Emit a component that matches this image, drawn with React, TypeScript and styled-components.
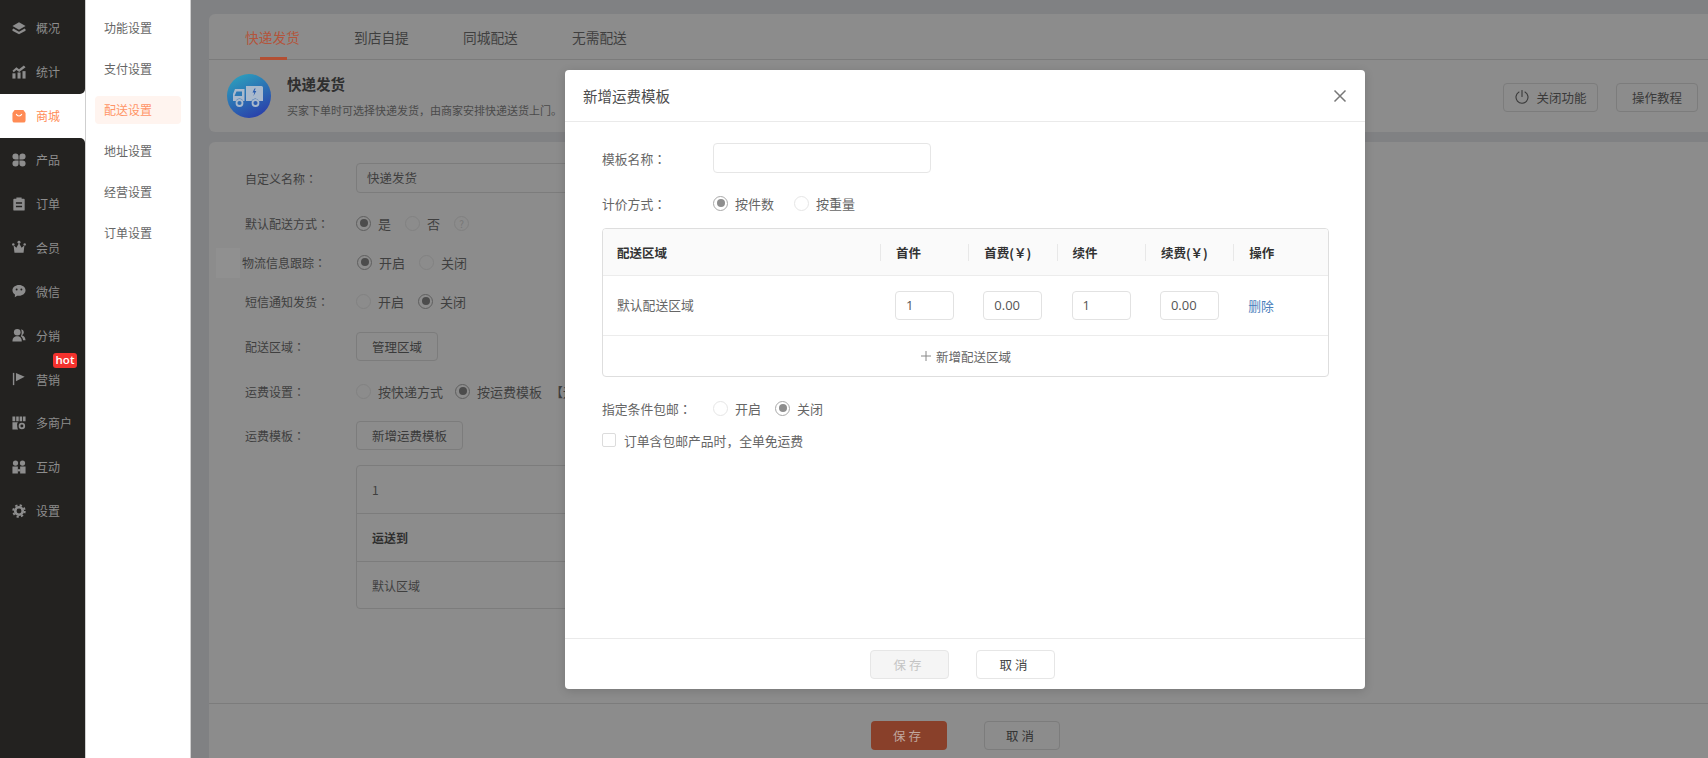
import React from "react";
import styled, { createGlobalStyle } from "styled-components";

const Global = createGlobalStyle`
  html, body { margin: 0; padding: 0; height: 100%; overflow: hidden; }
  #root { height: 100%; }
  * { box-sizing: border-box; }
  body { font-family: "Noto Sans CJK SC", "Noto Sans", sans-serif; font-size: 12px; color: #333; }
`;

const Page = styled.div`
  position: relative;
  display: flex;
  width: 1708px;
  height: 758px;
  overflow: hidden;
  background: #808183;
`;

const Rail = styled.nav`
  flex: none;
  width: 86px;
  padding-top: 6px;
  background: #fff;
  border-right: 1px solid #cfcfcf;
  display: flex;
  flex-direction: column;
`;
const RailFill = styled.div`
  flex: 1;
  background: #232220;
`;
const RailTopCap = styled.div`
  height: 6px;
  margin-top: -6px;
  background: #232220;
`;
const RailItem = styled.div<{ $active?: boolean; $before?: boolean; $after?: boolean }>`
  position: relative;
  flex: none;
  height: 43.9px;
  display: flex;
  align-items: center;
  padding-left: 12px;
  gap: 10px;
  background: ${(p) => (p.$active ? "#fff" : "#232220")};
  color: ${(p) => (p.$active ? "#ff8b55" : "#8d8d8d")};
  border-bottom-right-radius: ${(p) => (p.$before ? "5px" : "0")};
  border-top-right-radius: ${(p) => (p.$after ? "5px" : "0")};
  font-size: 12px;
  svg { width: 14px; height: 14px; flex: none; }
`;
const Hot = styled.span`
  position: absolute;
  right: 8px;
  top: -4px;
  height: 15px;
  width: 24px;
  border-radius: 3px;
  background: #f3322d;
  color: #fff;
  font: 600 11.5px/14px "Open Sans", sans-serif;
  text-align: center;
`;

const SubNav = styled.nav`
  flex: none;
  width: 105px;
  background: #fff;
  border-right: 1px solid #cfcfcf;
  padding: 14px 9px 0;
  display: flex;
  flex-direction: column;
  gap: 13px;
`;
const SubItem = styled.div<{ $active?: boolean }>`
  height: 28px;
  line-height: 28px;
  padding-left: 9px;
  border-radius: 4px;
  font-size: 12px;
  color: ${(p) => (p.$active ? "#ff9467" : "#666")};
  background: ${(p) => (p.$active ? "#fff4ef" : "transparent")};
`;

const Main = styled.main`
  flex: 1;
  min-width: 0;
  padding: 14px 0 0 18px;
  display: flex;
  flex-direction: column;
  gap: 10px;
`;
const TopCard = styled.section`
  height: 118px;
  flex: none;
  background: #8c8c8c;
  border-radius: 6px 0 0 6px;
`;
const Tabs = styled.div`
  height: 46px;
  padding-left: 36px;
  display: flex;
  border-bottom: 1px solid #7b7b7b;
`;
const Tab = styled.div<{ $active?: boolean }>`
  position: relative;
  width: 109px;
  font-size: 13.7px;
  line-height: 46px;
  color: ${(p) => (p.$active ? "#b3553c" : "#3f3f3f")};
  &::after {
    content: "";
    display: ${(p) => (p.$active ? "block" : "none")};
    position: absolute;
    left: 15px;
    bottom: -1px;
    width: 27px;
    height: 3px;
    background: #b34f33;
  }
`;
const Banner = styled.div`
  height: 72px;
  padding: 0 10px 0 18px;
  display: flex;
  align-items: center;
  gap: 16px;
  > svg { width: 44px; height: 44px; flex: none; margin-top: -1px; }
`;
const BannerText = styled.div`
  flex: 1;
  display: flex;
  flex-direction: column;
  gap: 7px;
  margin-top: -2px;
`;
const BannerTitle = styled.div`
  font-size: 14.5px;
  font-weight: 700;
  line-height: 22px;
  color: #2f2f2f;
`;
const BannerDesc = styled.div`
  font-size: 11px;
  line-height: 16px;
  color: #4a4a4a;
`;
const GhostButton = styled.div<{ $w?: number }>`
  height: 29px;
  width: ${(p) => (p.$w ? p.$w + "px" : "auto")};
  border: 1px solid #7c7c7c;
  border-radius: 4px;
  display: flex;
  align-items: center;
  justify-content: center;
  gap: 6px;
  font-size: 12.5px;
  color: #3a3a3a;
  flex: none;
  svg { width: 16px; height: 16px; }
`;
const BannerActions = styled.div`
  display: flex;
  gap: 18px;
  margin-top: 2px;
`;

const FormCard = styled.section`
  flex: 1;
  min-height: 0;
  background: #8c8c8c;
  border-radius: 6px 0 0 0;
  display: flex;
  flex-direction: column;
`;
const FormBody = styled.div`
  flex: none;
  height: 562px;
  padding: 21px 0 0 36px;
  border-bottom: 1px solid #7c7c7c;
`;
const Row = styled.div<{ $mt?: number; $shift?: number }>`
  display: flex;
  align-items: center;
  height: 30px;
  margin-top: ${(p) => p.$mt ?? 0}px;
  margin-left: ${(p) => p.$shift ?? 0}px;
  font-size: 12px;
`;
const GhostRow = styled(Row)`
  position: relative;
  &::before {
    content: "";
    position: absolute;
    left: -26px;
    top: 1px;
    width: 24px;
    height: 30px;
    background: #909090;
  }
`;
const BgLabel = styled.div<{ $w?: number }>`
  width: ${(p) => p.$w ?? 111}px;
  flex: none;
  color: #3f3f3f;
`;
const Colon = styled.span`
  font-family: "Noto Sans CJK TC", sans-serif;
`;
const BgInput = styled.div`
  width: 300px;
  height: 30px;
  border: 1px solid #7c7c7c;
  border-radius: 4px;
  line-height: 28px;
  padding-left: 10px;
  color: #3f3f3f;
  font-size: 12.5px;
`;
const Options = styled.div<{ $gap?: number }>`
  display: flex;
  align-items: center;
  gap: ${(p) => p.$gap ?? 14}px;
  white-space: nowrap;
`;
const Opt = styled.div<{ $dark?: boolean }>`
  display: flex;
  align-items: center;
  gap: 7px;
  color: ${(p) => (p.$dark ? "#3f3f3f" : "#666")};
  font-size: 13px;
`;
const BracketNote = styled(Opt)`
  margin-left: -4px;
`;
const Radio = styled.span<{ $on?: boolean; $dark?: boolean }>`
  width: 15px;
  height: 15px;
  flex: none;
  border-radius: 50%;
  border: 1px solid ${(p) => (p.$dark ? (p.$on ? "#5f5f5f" : "#828282") : p.$on ? "#a9a9a9" : "#e6e6e6")};
  background: ${(p) => (p.$dark ? "transparent" : "#fff")};
  display: flex;
  align-items: center;
  justify-content: center;
  &::after {
    content: "";
    display: ${(p) => (p.$on ? "block" : "none")};
    width: 8px;
    height: 8px;
    border-radius: 50%;
    background: ${(p) => (p.$dark ? "#4c4c4c" : "#8e8e8e")};
  }
`;
const Help = styled.span`
  width: 15px;
  height: 15px;
  border: 1px solid #808080;
  border-radius: 50%;
  font-size: 10px;
  line-height: 13px;
  text-align: center;
  color: #777;
`;
const BgTable = styled.div`
  width: 820px;
  height: 144px;
  margin: 15px 0 0 111px;
  border: 1px solid #7c7c7c;
  border-radius: 4px;
`;
const BgRow = styled.div<{ $bold?: boolean; $last?: boolean }>`
  height: ${(p) => (p.$last ? "46px" : "48px")};
  padding-left: 15px;
  display: flex;
  align-items: center;
  font-size: 12px;
  font-weight: ${(p) => (p.$bold ? 700 : 400)};
  color: ${(p) => (p.$bold ? "#2f2f2f" : "#3f3f3f")};
  border-bottom: ${(p) => (p.$last ? "none" : "1px solid #7c7c7c")};
`;
const PageFooter = styled.div`
  flex: 1;
  display: flex;
  justify-content: center;
  padding: 17px 0 0 13px;
  gap: 37px;
`;
const BgSave = styled.div`
  width: 76px;
  height: 29px;
  border-radius: 4px;
  background: #89402a;
  color: #c0a79e;
  font-size: 12.5px;
  letter-spacing: 3px;
  text-align: center;
  line-height: 29px;
`;
const BgCancel = styled(BgSave)`
  background: transparent;
  border: 1px solid #7c7c7c;
  line-height: 27px;
  color: #333;
`;

const Modal = styled.div`
  position: absolute;
  left: 565px;
  top: 70px;
  width: 800px;
  height: 619px;
  background: #fff;
  border-radius: 4px;
  box-shadow: 0 2px 10px rgba(0, 0, 0, 0.15);
  display: flex;
  flex-direction: column;
`;
const ModalHead = styled.div`
  flex: none;
  height: 52px;
  padding: 0 17px 0 18px;
  display: flex;
  align-items: center;
  justify-content: space-between;
  border-bottom: 1px solid #eaeaea;
  font-size: 14.5px;
  color: #4c4c4c;
  svg { width: 16px; height: 16px; }
`;
const ModalBody = styled.div`
  flex: 1;
  padding: 21px 36px 0 37px;
  font-size: 12.8px;
  color: #666;
`;
const ModalRow = styled.div<{ $mt?: number; $h?: number }>`
  display: flex;
  align-items: center;
  height: ${(p) => p.$h ?? 30}px;
  margin-top: ${(p) => p.$mt ?? 0}px;
  white-space: nowrap;
`;
const ModalLabel = styled.div`
  width: 111px;
  flex: none;
`;
const NameInput = styled.div`
  width: 218px;
  height: 30px;
  border: 1px solid #e6e6e6;
  border-radius: 4px;
`;
const ModalOptions = styled.div<{ $gap?: number }>`
  display: flex;
  align-items: center;
  gap: ${(p) => p.$gap ?? 20}px;
`;
const FeeTable = styled.div`
  width: 727px;
  height: 149px;
  margin-top: 10px;
  border: 1px solid #dedede;
  border-radius: 4px;
  overflow: hidden;
  display: flex;
  flex-direction: column;
`;
const FeeRow = styled.div`
  display: grid;
  grid-template-columns: 277px 88.3px 88.3px 88.3px 88.3px 1fr;
  align-items: center;
`;
const FeeHead = styled(FeeRow)`
  height: 47px;
  flex: none;
  background: #fafafa;
  border-bottom: 1px solid #ececec;
  font-weight: 700;
  font-size: 12.5px;
  color: #333;
`;
const FeeBody = styled(FeeRow)`
  height: 60px;
  flex: none;
  border-bottom: 1px solid #ececec;
  line-height: 18px;
`;
const HeadCell = styled.div<{ $first?: boolean }>`
  height: 17px;
  line-height: 17px;
  padding-left: ${(p) => (p.$first ? "14px" : "15px")};
  border-left: ${(p) => (p.$first ? "none" : "1px solid #e8e8e8")};
`;
const BodyCell = styled.div<{ $first?: boolean }>`
  padding-left: ${(p) => (p.$first ? "14px" : "15px")};
  margin-top: ${(p) => (p.$first ? "-1px" : "0")};
`;
const FeeInput = styled.div`
  width: 59px;
  height: 29px;
  border: 1px solid #e2e2e2;
  border-radius: 4px;
  padding-left: 10px;
  font: 13px/27px "Open Sans", sans-serif;
  color: #555;
`;
const DeleteLink = styled.span`
  color: #4a7ebb;
`;
const AddRow = styled.div`
  flex: 1;
  display: flex;
  align-items: center;
  justify-content: center;
  gap: 4px;
  font-size: 12.5px;
  color: #666;
  svg { width: 12px; height: 12px; }
`;
const CheckBox = styled.span`
  width: 14px;
  height: 14px;
  border: 1px solid #dcdcdc;
  border-radius: 2px;
  margin-right: 8px;
`;
const ModalFoot = styled.div`
  flex: none;
  height: 51px;
  border-top: 1px solid #eaeaea;
  display: flex;
  align-items: center;
  justify-content: center;
  gap: 27px;
  padding-right: 6px;
`;
const FootButton = styled.div<{ $off?: boolean }>`
  width: 79px;
  height: 29px;
  border: 1px solid #e6e6e6;
  border-radius: 4px;
  background: ${(p) => (p.$off ? "#f5f5f5" : "#fff")};
  color: ${(p) => (p.$off ? "#c4c4c4" : "#444")};
  font-size: 12.5px;
  letter-spacing: 3px;
  text-align: center;
  line-height: 27px;
`;

const IconLayers = () => (
  <svg viewBox="0 0 16 16" fill="currentColor">
    <path d="M8 1.5 15.5 5.8 8 10 .5 5.8Z" />
    <path d="M1.500 8.700 8 12.300l6.500-3.600 1 1.100v1.300L8 15 .5 11.100V9.800Z" />
  </svg>
);
const IconChart = () => (
  <svg viewBox="0 0 16 16" fill="currentColor">
    <rect x="0.5" y="9.500" width="3.500" height="6" />
    <rect x="6.300" y="8.500" width="3.500" height="7" />
    <rect x="12" y="7" width="3.500" height="8.500" />
    <path d="M.5 6.500 5 2.500l3 2.300L13.500.5l2 2L8.300 8 5 5.700 2 8.300Z" />
  </svg>
);
const IconBag = () => (
  <svg viewBox="0 0 16 16">
    <path fill="#ff8b55" d="M3 1h10l2.500 3.500V13a2.500 2.500 0 0 1-2.500 2.500H3A2.500 2.500 0 0 1 .5 13V4.500Z" />
    <path d="M4.800 5.800c.7 1.600 1.800 2.200 3.200 2.200s2.500-.6 3.200-2.200" fill="none" stroke="#fff" strokeWidth="1.300" />
  </svg>
);
const IconClover = () => (
  <svg viewBox="0 0 16 16" fill="currentColor">
    <path d="M4 .5A3.500 3.500 0 0 1 7.500 4v3.500H4A3.500 3.500 0 0 1 4 .5Z" />
    <path d="M12 .5a3.500 3.500 0 0 1 0 7H8.500V4A3.500 3.500 0 0 1 12 .5Z" />
    <path d="M4 8.500h3.500V12A3.500 3.500 0 1 1 4 8.500Z" />
    <path d="M8.500 8.500H12a3.500 3.500 0 1 1-3.500 3.500Z" />
  </svg>
);
const IconClip = () => (
  <svg viewBox="0 0 16 16" fill="currentColor">
    <path
      fillRule="evenodd"
      d="M5 .5h6V2h2.500a1 1 0 0 1 1 1v11.500a1 1 0 0 1-1 1h-11a1 1 0 0 1-1-1V3a1 1 0 0 1 1-1H5ZM4.500 6v1.800h7V6Zm0 4v1.800h7V10Z"
    />
  </svg>
);
const IconCrown = () => (
  <svg viewBox="0 0 16 16" fill="currentColor">
    <circle cx="8" cy="2.500" r="1.700" />
    <circle cx="1.500" cy="5" r="1.400" />
    <circle cx="14.500" cy="5" r="1.400" />
    <path d="M1.800 6 5 8.800 8 3.500l3 5.300L14.200 6l-1 8.500H2.800Z" />
  </svg>
);
const IconChat = () => (
  <svg viewBox="0 0 16 16">
    <path fill="currentColor" d="M8 1c4.200 0 7.500 2.700 7.500 6.200S12.200 13.500 8 13.500c-.7 0-1.400-.1-2-.2L3.200 15l.2-3C1.600 10.900.5 9.200.5 7.200.5 3.700 3.800 1 8 1Z" />
    <circle cx="5.300" cy="6.300" r="1.100" fill="#232220" />
    <circle cx="10.700" cy="6.300" r="1.100" fill="#232220" />
  </svg>
);
const IconUsers = () => (
  <svg viewBox="0 0 16 16" fill="currentColor">
    <circle cx="6" cy="4.800" r="3.800" />
    <path d="M.5 15.500c0-4.300 2.200-6 5.500-6s5 1.700 5.200 6Z" />
    <path d="M10.500 1.500c1.700.4 3 1.700 3 3.400s-1 2.900-2.200 3.300c2.700.7 4 2.800 4.200 5.800h-2.800c-.2-2.200-1.100-3.800-2.700-4.700 1.200-1.500 1.500-4.200.5-7.800Z" />
  </svg>
);
const IconFlag = () => (
  <svg viewBox="0 0 16 16" fill="currentColor">
    <rect x="1" y="1" width="1.600" height="14" />
    <path d="M4.500 1 14.500 5.500 4.500 10.500Z" />
  </svg>
);
const IconStore = () => (
  <svg viewBox="0 0 16 16" fill="currentColor">
    <path d="M.5.500h3.200v5.500H.5Zm4.300 0h2.900v5.500H4.800Zm3.900 0h2.900v5.500H8.700Zm3.900 0h2.900v5.500h-2.900Z" />
    <path d="M.5 7h6.200A5 5 0 0 0 6 12c0 1.300.3 2.500 1 3.500H.5Z" />
    <circle cx="11.300" cy="11.300" r="2.700" fill="none" stroke="currentColor" strokeWidth="2" />
  </svg>
);
const IconInteract = () => (
  <svg viewBox="0 0 16 16" fill="currentColor">
    <circle cx="4" cy="3.500" r="3" />
    <circle cx="12" cy="3.500" r="3" />
    <path d="M.5 7.500h6.200v8H.5Zm8.800 0h6.200v8H9.300Z" />
    <path d="M6.500 10.500h3V13h-3Z" />
  </svg>
);
const IconGear = () => (
  <svg viewBox="0 0 16 16" fill="none" stroke="currentColor">
    <circle cx="8" cy="8" r="4.300" strokeWidth="3" />
    <circle cx="8" cy="8" r="6.600" strokeWidth="2.200" strokeDasharray="2.600 2.580" />
  </svg>
);
const IconPower = () => (
  <svg viewBox="0 0 16 16" fill="none" stroke="#3a3a3a" strokeWidth="1.100" strokeLinecap="round">
    <path d="M8 1.500v6" />
    <path d="M5 3A6 6 0 1 0 11 3" />
  </svg>
);
const IconClose = () => (
  <svg viewBox="0 0 16 16" fill="none" stroke="#777" strokeWidth="1.500">
    <path d="M2.500 2.500l11 11M13.500 2.500l-11 11" />
  </svg>
);
const IconPlus = () => (
  <svg viewBox="0 0 12 12" fill="none" stroke="#888" strokeWidth="1">
    <path d="M6 1v10M1 6h10" />
  </svg>
);
const IconTruck = () => (
  <svg viewBox="0 0 44 44">
    <defs>
      <linearGradient id="tg" x1="0.25" y1="0" x2="0.75" y2="1">
        <stop offset="0" stopColor="#2c9fbd" />
        <stop offset="1" stopColor="#2a3daa" />
      </linearGradient>
    </defs>
    <circle cx="22" cy="22" r="22" fill="url(#tg)" />
    <g fill="#a9b9cc">
      <path d="M19 12h15.500a1.500 1.500 0 0 1 1.500 1.500V27h-4a4 4 0 0 0-7.500 0H19Z" />
      <path d="M8 15h9.500v12h-1.300a4 4 0 0 0-7.400 0H6v-7Z" />
    </g>
    <path d="M9.500 17.500h5.500V22H7.500Z" fill="#2c79b5" />
    <path d="M27.500 14.500l-2 4h1.800l-.8 3.500 2.800-5h-1.800l1.200-2.500Z" fill="#2a5cae" />
    <circle cx="12.500" cy="29" r="3" fill="#2c6cb2" stroke="#a9b9cc" strokeWidth="1.800" />
    <circle cx="28.500" cy="29" r="3" fill="#2c5cb0" stroke="#a9b9cc" strokeWidth="1.800" />
  </svg>
);

const railItems: { icon: React.ReactNode; label: string; hot?: boolean; active?: boolean }[] = [
  { icon: <IconLayers />, label: "概况" },
  { icon: <IconChart />, label: "统计" },
  { icon: <IconBag />, label: "商城", active: true },
  { icon: <IconClover />, label: "产品" },
  { icon: <IconClip />, label: "订单" },
  { icon: <IconCrown />, label: "会员" },
  { icon: <IconChat />, label: "微信" },
  { icon: <IconUsers />, label: "分销" },
  { icon: <IconFlag />, label: "营销", hot: true },
  { icon: <IconStore />, label: "多商户" },
  { icon: <IconInteract />, label: "互动" },
  { icon: <IconGear />, label: "设置" },
];

const subItems = ["功能设置", "支付设置", "配送设置", "地址设置", "经营设置", "订单设置"];
const feeHeads = ["首件", "首费(￥)", "续件", "续费(￥)", "操作"];

const DarkOption = ({ on, children }: { on?: boolean; children: React.ReactNode }) => (
  <Opt $dark>
    <Radio $dark $on={on} />
    {children}
  </Opt>
);

const LightOption = ({ on, children }: { on?: boolean; children: React.ReactNode }) => (
  <Opt>
    <Radio $on={on} />
    {children}
  </Opt>
);

const C = () => <Colon>：</Colon>;

export default function App() {
  return (
    <Page>
      <Global />
      <Rail>
        <RailTopCap />
        {railItems.map((it, i) => (
          <RailItem key={it.label} $active={it.active} $before={i === 1} $after={i === 3}>
            {it.icon}
            {it.label}
            {it.hot && <Hot>hot</Hot>}
          </RailItem>
        ))}
        <RailFill />
      </Rail>
      <SubNav>
        {subItems.map((s) => (
          <SubItem key={s} $active={s === "配送设置"}>
            {s}
          </SubItem>
        ))}
      </SubNav>
      <Main>
        <TopCard>
          <Tabs>
            <Tab $active>快递发货</Tab>
            <Tab>到店自提</Tab>
            <Tab>同城配送</Tab>
            <Tab>无需配送</Tab>
          </Tabs>
          <Banner>
            <IconTruck />
            <BannerText>
              <BannerTitle>快递发货</BannerTitle>
              <BannerDesc>买家下单时可选择快递发货，由商家安排快递送货上门。</BannerDesc>
            </BannerText>
            <BannerActions>
              <GhostButton $w={95}>
                <IconPower />
                关闭功能
              </GhostButton>
              <GhostButton $w={82}>操作教程</GhostButton>
            </BannerActions>
          </Banner>
        </TopCard>
        <FormCard>
          <FormBody>
            <Row>
              <BgLabel>自定义名称<C /></BgLabel>
              <BgInput>快递发货</BgInput>
            </Row>
            <Row $mt={15}>
              <BgLabel>默认配送方式<C /></BgLabel>
              <Options>
                <DarkOption on>是</DarkOption>
                <DarkOption>否</DarkOption>
                <Help>?</Help>
              </Options>
            </Row>
            <GhostRow $mt={9} $shift={-3}>
              <BgLabel $w={115}>物流信息跟踪<C /></BgLabel>
              <Options>
                <DarkOption on>开启</DarkOption>
                <DarkOption>关闭</DarkOption>
              </Options>
            </GhostRow>
            <Row $mt={9}>
              <BgLabel>短信通知发货<C /></BgLabel>
              <Options>
                <DarkOption>开启</DarkOption>
                <DarkOption on>关闭</DarkOption>
              </Options>
            </Row>
            <Row $mt={15}>
              <BgLabel>配送区域<C /></BgLabel>
              <GhostButton $w={82}>管理区域</GhostButton>
            </Row>
            <Row $mt={15}>
              <BgLabel>运费设置<C /></BgLabel>
              <Options $gap={12}>
                <DarkOption>按快递方式</DarkOption>
                <DarkOption on>按运费模板</DarkOption>
                <BracketNote $dark>【运费模板】</BracketNote>
              </Options>
            </Row>
            <Row $mt={14}>
              <BgLabel>运费模板<C /></BgLabel>
              <GhostButton $w={107}>新增运费模板</GhostButton>
            </Row>
            <BgTable>
              <BgRow>1</BgRow>
              <BgRow $bold>运送到</BgRow>
              <BgRow $last>默认区域</BgRow>
            </BgTable>
          </FormBody>
          <PageFooter>
            <BgSave>保存</BgSave>
            <BgCancel>取消</BgCancel>
          </PageFooter>
        </FormCard>
      </Main>
      <Modal>
        <ModalHead>
          新增运费模板
          <IconClose />
        </ModalHead>
        <ModalBody>
          <ModalRow>
            <ModalLabel>模板名称<C /></ModalLabel>
            <NameInput />
          </ModalRow>
          <ModalRow $mt={15}>
            <ModalLabel>计价方式<C /></ModalLabel>
            <ModalOptions>
              <LightOption on>按件数</LightOption>
              <LightOption>按重量</LightOption>
            </ModalOptions>
          </ModalRow>
          <FeeTable>
            <FeeHead>
              <HeadCell $first>配送区域</HeadCell>
              {feeHeads.map((h) => (
                <HeadCell key={h}>{h}</HeadCell>
              ))}
            </FeeHead>
            <FeeBody>
              <BodyCell $first>默认配送区域</BodyCell>
              <BodyCell>
                <FeeInput>1</FeeInput>
              </BodyCell>
              <BodyCell>
                <FeeInput>0.00</FeeInput>
              </BodyCell>
              <BodyCell>
                <FeeInput>1</FeeInput>
              </BodyCell>
              <BodyCell>
                <FeeInput>0.00</FeeInput>
              </BodyCell>
              <BodyCell>
                <DeleteLink>删除</DeleteLink>
              </BodyCell>
            </FeeBody>
            <AddRow>
              <IconPlus />
              新增配送区域
            </AddRow>
          </FeeTable>
          <ModalRow $mt={16}>
            <ModalLabel>指定条件包邮<C /></ModalLabel>
            <ModalOptions $gap={14}>
              <LightOption>开启</LightOption>
              <LightOption on>关闭</LightOption>
            </ModalOptions>
          </ModalRow>
          <ModalRow $mt={2}>
            <CheckBox />
            订单含包邮产品时，全单免运费
          </ModalRow>
        </ModalBody>
        <ModalFoot>
          <FootButton $off>保存</FootButton>
          <FootButton>取消</FootButton>
        </ModalFoot>
      </Modal>
    </Page>
  );
}
